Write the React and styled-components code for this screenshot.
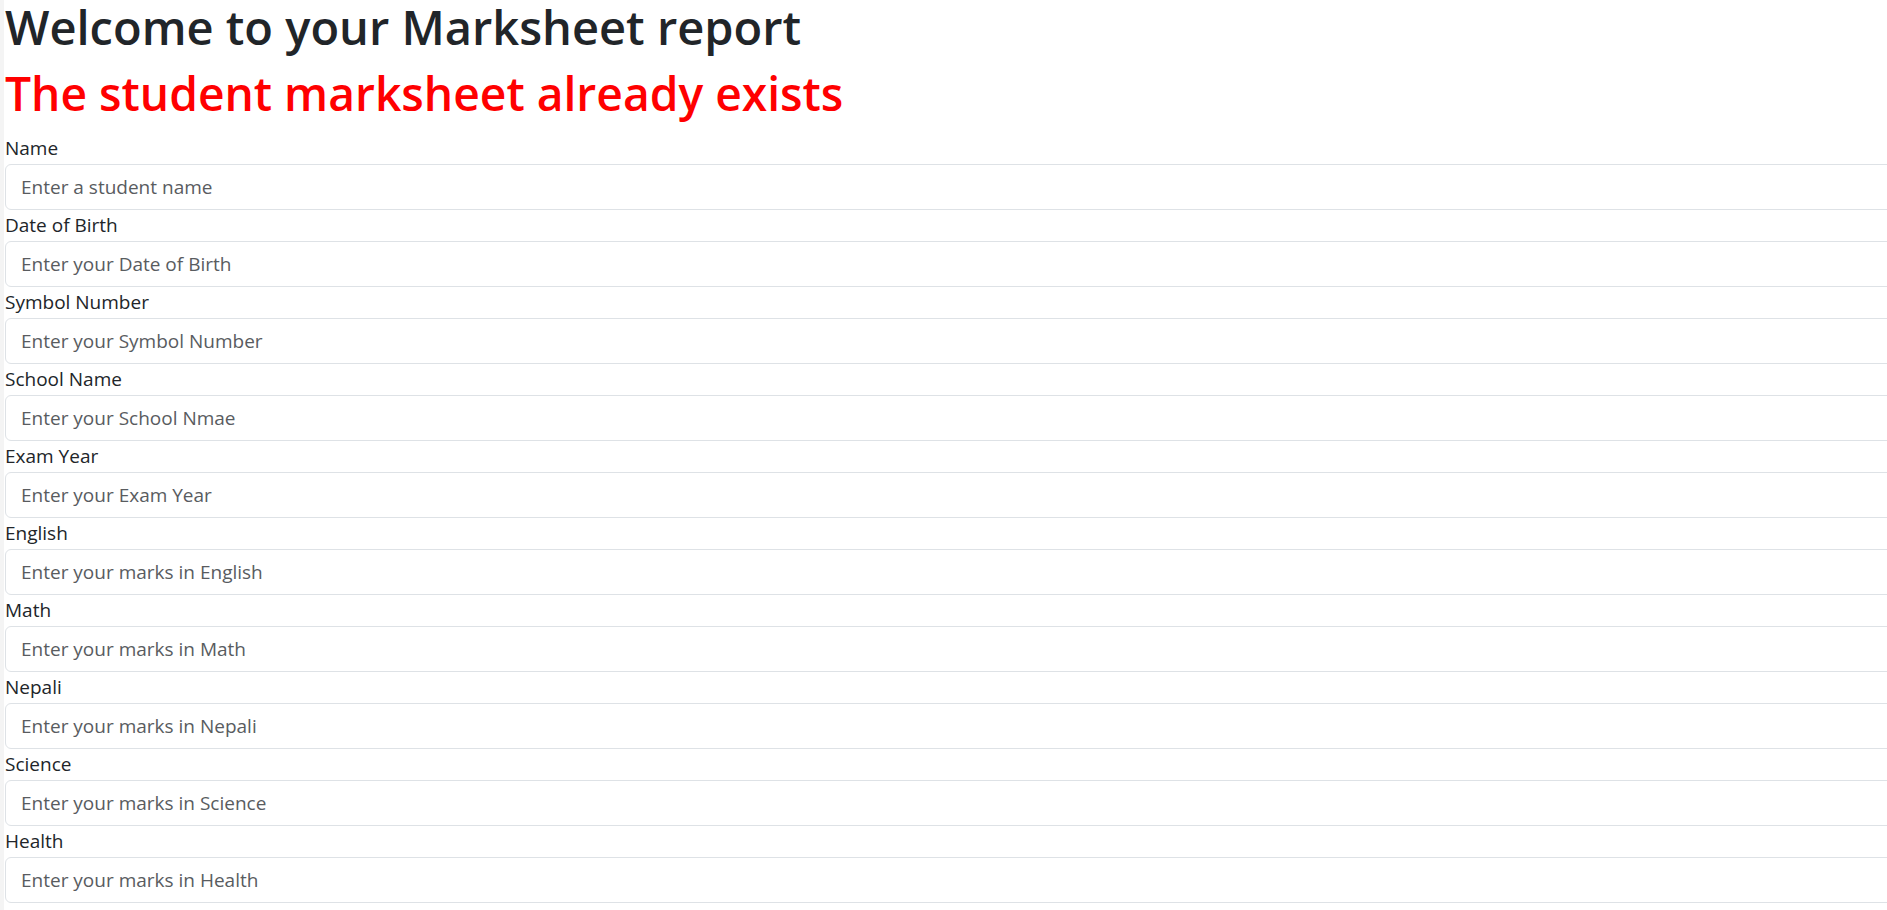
import React from 'react'
import styled, { createGlobalStyle } from 'styled-components'

const GlobalStyle = createGlobalStyle`
  html, body {
    margin: 0;
    padding: 0;
    overflow: hidden;
    background: #ffffff;
  }
  body {
    font-family: "Open Sans", "Noto Sans", sans-serif;
    color: #212529;
  }
  * { box-sizing: border-box; }
`

const fields = [
  { label: 'Name', placeholder: 'Enter a student name' },
  { label: 'Date of Birth', placeholder: 'Enter your Date of Birth' },
  { label: 'Symbol Number', placeholder: 'Enter your Symbol Number' },
  { label: 'School Name', placeholder: 'Enter your School Nmae' },
  { label: 'Exam Year', placeholder: 'Enter your Exam Year' },
  { label: 'English', placeholder: 'Enter your marks in English' },
  { label: 'Math', placeholder: 'Enter your marks in Math' },
  { label: 'Nepali', placeholder: 'Enter your marks in Nepali' },
  { label: 'Science', placeholder: 'Enter your marks in Science' },
  { label: 'Health', placeholder: 'Enter your marks in Health' },
  { label: 'Computer', placeholder: 'Enter your marks in Computer' },
]

const App = () => {
  return (
    <>
      <GlobalStyle />
      <Page>
        <Title>Welcome to your Marksheet report</Title>
        <Notice>The student marksheet already exists</Notice>
        <Form onSubmit={(e) => e.preventDefault()}>
          {fields.map((f, index) => (
            <Field key={index}>
              <Label htmlFor={`field-${index}`}>{f.label}</Label>
              <Input id={`field-${index}`} type="text" placeholder={f.placeholder} />
            </Field>
          ))}
        </Form>
      </Page>
    </>
  )
}

const Page = styled.div`
  width: 1960px;
  border-left: 4px solid #f4f4f4;
  padding-left: 1px;
  min-height: 100vh;
`
const Title = styled.h1`
  margin: 0;
  font-size: 47px;
  font-weight: 600;
  line-height: 54px;
  color: #212529;
`
const Notice = styled.h1`
  margin: 0;
  font-size: 46.2px;
  font-weight: 600;
  line-height: 79px;
  color: #ff0000;
`
const Form = styled.form`
  display: flex;
  flex-direction: column;
`
const Field = styled.div`
  display: flex;
  flex-direction: column;
`
const Label = styled.label`
  display: block;
  font-size: 19px;
  line-height: 31px;
  color: #212529;
`
const Input = styled.input`
  display: block;
  width: 100%;
  height: 46px;
  padding: 0 15px;
  font-family: inherit;
  font-size: 19px;
  color: #212529;
  background: #ffffff;
  border: 1px solid #dee2e6;
  border-radius: 6px;
  outline: none;

  &::placeholder {
    color: #595c5f;
  }
`

export default App
